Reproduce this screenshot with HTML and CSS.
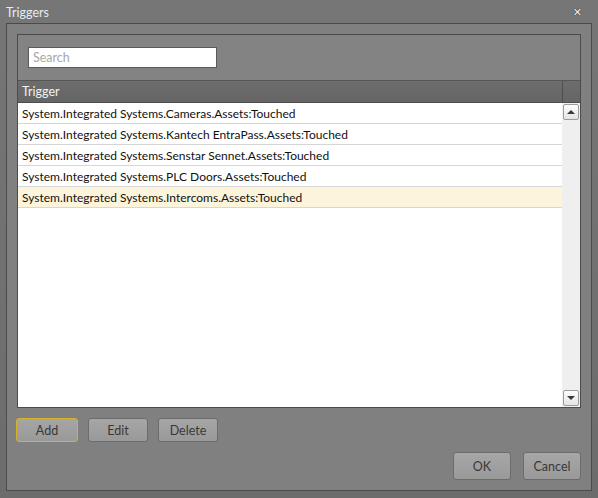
FILE: index.html
```html
<!DOCTYPE html>
<html>
<head>
<meta charset="utf-8">
<link rel="stylesheet" href="styles.css">
</head>
<body>
<div class="window">
  <div class="titlebar">
    <span class="title">Triggers</span>
    <span class="close">✕</span>
  </div>
  <div class="panel">
    <div class="grid">
      <div class="toolbar">
        <div class="search">Search</div>
      </div>
      <div class="header">
        <div class="hcell">Trigger</div>
        <div class="hspacer"></div>
      </div>
      <div class="body">
        <div class="rows">
          <div class="row">System.Integrated Systems.Cameras.Assets:Touched</div>
          <div class="row">System.Integrated Systems.Kantech EntraPass.Assets:Touched</div>
          <div class="row">System.Integrated Systems.Senstar Sennet.Assets:Touched</div>
          <div class="row">System.Integrated Systems.PLC Doors.Assets:Touched</div>
          <div class="row selected">System.Integrated Systems.Intercoms.Assets:Touched</div>
        </div>
        <div class="scrollbar">
          <div class="sbtn"><span class="tri up"></span></div>
          <div class="sbtn"><span class="tri down"></span></div>
        </div>
      </div>
    </div>
    <div class="actions">
      <div class="btn add">Add</div>
      <div class="btn">Edit</div>
      <div class="btn">Delete</div>
    </div>
    <div class="footer">
      <div class="btn big">OK</div>
      <div class="btn big">Cancel</div>
    </div>
  </div>
</div>
</body>
</html>
```
FILE: styles.css
```css
html, body {
  margin: 0;
  padding: 0;
}
body {
  width: 598px;
  height: 498px;
  background: linear-gradient(#767676, #6c6c6c);
  font-family: "Lato", "Liberation Sans", sans-serif;
  font-size: 12px;
  overflow: hidden;
}
.window {
  display: flex;
  flex-direction: column;
  height: 498px;
}
.titlebar {
  height: 23px;
  flex-shrink: 0;
  display: flex;
  align-items: center;
  justify-content: space-between;
  padding: 0 16px 0 6px;
  box-sizing: border-box;
}
.title {
  color: #e4ecf2;
  font-size: 12.5px;
  margin-top: 2px;
}
.close {
  color: #f4f4f4;
  font-family: "DejaVu Sans", sans-serif;
  font-weight: bold;
  font-size: 11px;
  text-shadow: 0 0 1px #333, 0 0 1px #333;
  margin-top: 1px;
}
.panel {
  margin: 0 6px 7px 6px;
  border: 1px solid #4b4b4b;
  background: #808080;
  padding: 10px;
  display: flex;
  flex-direction: column;
  flex: 1;
}
.grid {
  border: 1px solid #4b4b4b;
  height: 372px;
  flex-shrink: 0;
  display: flex;
  flex-direction: column;
}
.toolbar {
  height: 45px;
  flex-shrink: 0;
  background: #838383;
  padding: 12px 0 0 10px;
  box-sizing: border-box;
}
.search {
  width: 189px;
  height: 21px;
  box-sizing: border-box;
  background: #fff;
  border: 1px solid #5a5a5a;
  color: #a8a8a8;
  padding: 1px 0 0 4px;
  line-height: 18px;
  font-size: 12.5px;
}
.header {
  height: 23px;
  flex-shrink: 0;
  box-sizing: border-box;
  border-top: 1px solid #555;
  border-bottom: 1px solid #4e4e4e;
  background: linear-gradient(#6d6d6d, #656565);
  display: flex;
}
.hcell {
  flex: 1;
  color: #f2f2f2;
  padding-left: 4px;
  line-height: 21px;
  font-size: 12.5px;
}
.hspacer {
  width: 17px;
  border-left: 1px solid #4e4e4e;
}
.body {
  flex: 1;
  display: flex;
  background: #fff;
}
.rows {
  flex: 1;
}
.row {
  height: 21px;
  box-sizing: border-box;
  border-bottom: 1px solid #d6d6d6;
  padding-left: 4px;
  line-height: 21px;
  color: #111;
  white-space: nowrap;
  font-size: 12px;
}
.row.selected {
  background: #fdf4dc;
}
.scrollbar {
  width: 18px;
  background: #efefef;
  display: flex;
  flex-direction: column;
  justify-content: space-between;
  padding: 1px 0 1px 1px;
  box-sizing: border-box;
}
.sbtn {
  width: 16px;
  height: 16px;
  box-sizing: border-box;
  border: 1px solid #9c9c9c;
  border-radius: 2px;
  background: linear-gradient(#fdfdfd, #e4e4e4);
  display: flex;
  align-items: center;
  justify-content: center;
}
.tri {
  width: 0;
  height: 0;
  border-left: 4px solid transparent;
  border-right: 4px solid transparent;
}
.tri.up {
  border-bottom: 4px solid #3a3a3a;
}
.tri.down {
  border-top: 4px solid #3a3a3a;
}
.actions {
  display: flex;
  gap: 10px;
  margin-top: 10px;
}
.btn {
  width: 60px;
  height: 24px;
  flex-shrink: 0;
  box-sizing: border-box;
  border: 1px solid #6c6c6c;
  border-radius: 3px;
  background: linear-gradient(#a6a6a6, #999999);
  color: #383838;
  display: flex;
  align-items: center;
  justify-content: center;
  font-size: 12.5px;
}
.btn.add {
  width: 62px;
  margin-left: -1px;
  border-color: #d6b22c;
}
.footer {
  display: flex;
  justify-content: flex-end;
  gap: 12px;
  margin-top: 10px;
}
.btn.big {
  width: 58px;
  height: 28px;
}
```
